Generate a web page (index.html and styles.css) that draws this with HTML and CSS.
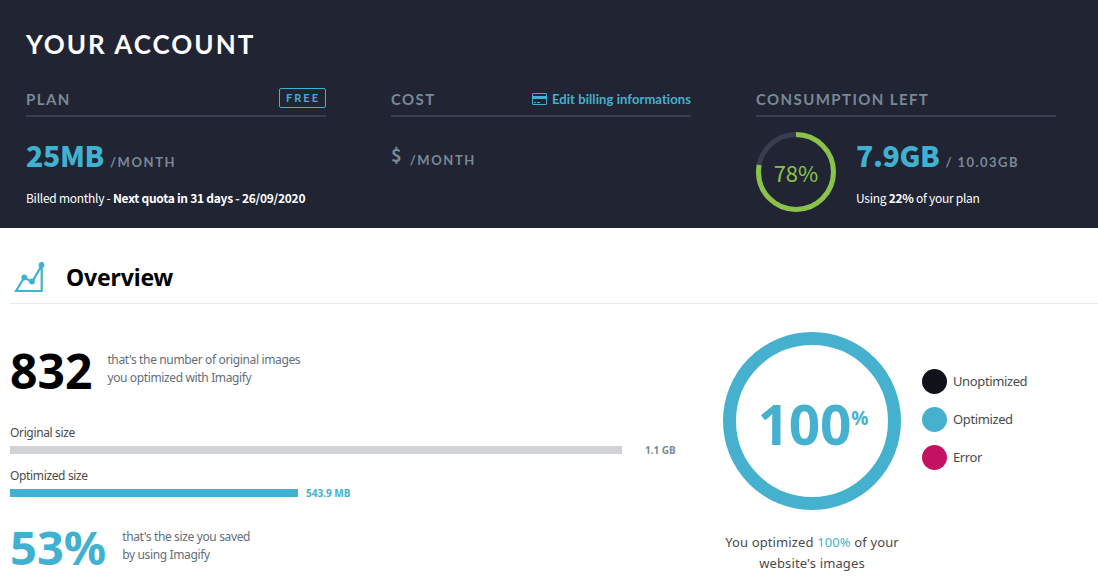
FILE: index.html
```
<!DOCTYPE html>
<html lang="en">
<head>
    <meta charset="UTF-8">
    <meta name="viewport" content="width=device-width, initial-scale=1.0">
    <title>Your Account</title>
    <link rel="stylesheet" href="styles.css">
</head>
<body>
    <section class="account">
        <h1>Your Account</h1>

        <div class="account-columns">
            <div class="column">
                <div class="column-header">
                    <h2>Plan</h2>
                    <span class="badge">Free</span>
                </div>
                <p class="value"><strong>25MB</strong><span class="unit">/month</span></p>
                <p class="note">Billed monthly - <b>Next quota in 31 days - 26/09/2020</b></p>
            </div>

            <div class="column">
                <div class="column-header">
                    <h2>Cost</h2>
                    <a href="#" class="billing-link">
                        <svg width="15" height="12" viewBox="0 0 15 12">
                            <rect x="0.5" y="0.5" width="14" height="11" rx="0.5" fill="none" stroke="#40b1d0"/>
                            <path d="M1 3h13v3H1z" fill="#40b1d0"/>
                            <path d="M2 9.5h2M5 9.5h3" stroke="#40b1d0"/>
                        </svg>
                        <span>Edit billing informations</span>
                    </a>
                </div>
                <p class="value value-cost"><span class="currency">$</span><span class="unit">/month</span></p>
            </div>

            <div class="column">
                <div class="column-header">
                    <h2>Consumption left</h2>
                </div>
                <div class="consumption">
                    <div class="small-chart">
                        <svg width="80" height="80" viewBox="0 0 80 80">
                            <circle cx="40" cy="40" r="37.5" fill="none" stroke="#3a3d51" stroke-width="5"/>
                            <circle cx="40" cy="40" r="37.5" fill="none" stroke="#8bc34a" stroke-width="5" pathLength="100" stroke-dasharray="78 22" transform="rotate(-90 40 40)"/>
                        </svg>
                        <span class="small-chart-text">78%</span>
                    </div>
                    <div>
                        <p class="value"><strong>7.9GB</strong><span class="unit unit-left">/ 10.03GB</span></p>
                        <p class="note">Using <b>22%</b> of your plan</p>
                    </div>
                </div>
            </div>
        </div>
    </section>

    <section class="overview">
        <div class="overview-header">
            <svg width="32" height="32" viewBox="0 0 32 32">
                <path d="M2 29L10.3 15.5L18 20L27.7 3.5V29Z" fill="none" stroke="#40b1d0" stroke-width="2.2"/>
                <circle cx="10.3" cy="15.5" r="2.9" fill="#40b1d0"/>
                <circle cx="18" cy="19.5" r="2.9" fill="#40b1d0"/>
                <circle cx="27.5" cy="2.9" r="2.9" fill="#40b1d0"/>
            </svg>
            <h2>Overview</h2>
        </div>

        <div class="overview-content">
            <div class="stats">
                <div class="stat">
                    <span class="number">832</span>
                    <p>that's the number of original images<br>you optimized with Imagify</p>
                </div>

                <div class="bars">
                    <p class="bar-label">Original size</p>
                    <div class="bar-row bar-original">
                        <div class="bar" style="width: 612px"></div>
                        <span>1.1 GB</span>
                    </div>
                    <p class="bar-label">Optimized size</p>
                    <div class="bar-row bar-optimized">
                        <div class="bar" style="width: 288px"></div>
                        <span>543.9 MB</span>
                    </div>
                </div>

                <div class="stat stat-saved">
                    <span class="number">53%</span>
                    <p>that's the size you saved<br>by using Imagify</p>
                </div>
            </div>

            <div class="chart-column">
                <div class="chart">
                    <span class="chart-number">100</span><span class="chart-percent">%</span>
                </div>
                <p class="chart-text">You optimized <span>100%</span> of your<br>website's images</p>
            </div>

            <ul class="legend">
                <li><span class="dot dot-unoptimized"></span><span>Unoptimized</span></li>
                <li><span class="dot dot-optimized"></span><span>Optimized</span></li>
                <li><span class="dot dot-error"></span><span>Error</span></li>
            </ul>
        </div>
    </section>
</body>
</html>
```
FILE: styles.css
```
* {
    margin: 0;
    padding: 0;
    box-sizing: border-box;
}

body {
    background-color: #fff;
    font-family: 'Noto Sans', 'Open Sans', sans-serif;
    overflow: hidden;
}

/* Account */
.account {
    height: 228px;
    padding: 26px 0 0 26px;
    background-color: #212433;
    color: #fff;
    font-family: 'Lato', sans-serif;
}

.account h1 {
    height: 36px;
    line-height: 36px;
    font-size: 26px;
    font-weight: 700;
    letter-spacing: 2px;
    text-transform: uppercase;
}

.account-columns {
    display: flex;
    gap: 65px;
    margin-top: 22px;
}

.column {
    width: 300px;
}

.column-header {
    display: flex;
    justify-content: space-between;
    height: 33px;
    padding-top: 4px;
    border-bottom: 2px solid #3a3d51;
}

.column-header h2 {
    line-height: 22px;
    font-size: 15px;
    font-weight: 700;
    letter-spacing: 1.4px;
    text-transform: uppercase;
    color: #7a8996;
}

.badge {
    height: 20px;
    padding: 0 5px 0 6px;
    border: 1px solid #40b1d0;
    border-radius: 2px;
    line-height: 18px;
    font-size: 11px;
    font-weight: 700;
    letter-spacing: 2px;
    text-transform: uppercase;
    color: #40b1d0;
}

.billing-link {
    display: flex;
    align-items: center;
    gap: 5px;
    height: 22px;
    font-size: 13px;
    font-weight: 700;
    letter-spacing: 0.08px;
    text-decoration: none;
    color: #40b1d0;
}

.value {
    display: flex;
    align-items: baseline;
    gap: 6px;
    height: 40px;
    margin-top: 18px;
    line-height: 40px;
    white-space: nowrap;
}

.value strong {
    font-family: 'Noto Sans CJK SC', sans-serif;
    font-size: 28.5px;
    font-weight: 900;
    letter-spacing: -0.4px;
    color: #40b1d0;
}

.unit {
    font-size: 13px;
    font-weight: 700;
    letter-spacing: 1.6px;
    text-transform: uppercase;
    color: #7a8996;
}

.unit-left {
    letter-spacing: 1.45px;
}

.value-cost {
    align-items: flex-start;
    gap: 8px;
    margin-top: 17px;
}

.value-cost .unit {
    line-height: 52px;
}

.currency {
    font-family: 'Noto Sans CJK SC', sans-serif;
    font-size: 18px;
    font-weight: 700;
    color: #7a8996;
}

.note {
    margin-top: 13px;
    line-height: 20px;
    font-family: 'Noto Sans CJK SC', sans-serif;
    font-size: 12px;
    letter-spacing: -0.27px;
    white-space: nowrap;
}

.consumption {
    display: flex;
    gap: 20px;
}

.small-chart {
    display: grid;
    width: 80px;
    height: 80px;
    margin-top: 15px;
    place-items: center;
}

.small-chart svg,
.small-chart-text {
    grid-area: 1 / 1;
}

.small-chart-text {
    padding-bottom: 1px;
    font-family: 'Noto Sans CJK SC', sans-serif;
    font-size: 22px;
    line-height: 30px;
    color: #8bc34a;
}

/* Overview */
.overview {
    padding-left: 10px;
}

.overview-header {
    display: flex;
    gap: 20px;
    height: 76px;
    padding: 34px 0 0 4px;
    border-bottom: 1px solid #e5ebef;
}

.overview-header h2 {
    line-height: 31px;
    font-size: 23px;
    font-weight: 700;
    letter-spacing: -0.15px;
    color: #000;
}

.overview-content {
    display: flex;
}

.stats {
    width: 713px;
    padding-top: 42px;
}

.stat {
    display: flex;
    gap: 15px;
    height: 50px;
}

.number {
    line-height: 50px;
    font-size: 48px;
    font-weight: 700;
    color: #000;
}

.stat p {
    padding-top: 5px;
    line-height: 18px;
    font-size: 12px;
    letter-spacing: -0.36px;
    color: #626e7b;
}

.stat-saved {
    gap: 16px;
}

.stat-saved .number {
    line-height: 49px;
    font-size: 47px;
    color: #40b1d0;
}

.bars {
    height: 127px;
    padding-top: 27px;
}

.bar-label {
    height: 20px;
    line-height: 20px;
    font-size: 12px;
    letter-spacing: -0.35px;
    color: #4a4a4a;
}

.bar-row {
    display: flex;
    align-items: center;
    height: 14px;
    margin-bottom: 9px;
    font-size: 10px;
    font-weight: 700;
}

.bar {
    height: 8px;
}

.bar-original .bar {
    background-color: #d2d3d6;
}

.bar-original span {
    margin-left: 23px;
    color: #7a8996;
}

.bar-optimized .bar {
    background-color: #40b1d0;
}

.bar-optimized span {
    margin-left: 8px;
    color: #40b1d0;
}

.chart-column {
    width: 178px;
    padding-top: 28px;
}

.chart {
    display: flex;
    justify-content: center;
    width: 178px;
    height: 178px;
    padding: 38px 0 0 2px;
    border: 13px solid #46b1ce;
    border-radius: 50%;
    font-weight: 700;
    color: #46b1ce;
}

.chart-number {
    line-height: 82px;
    font-size: 55px;
    letter-spacing: -0.3px;
}

.chart-percent {
    line-height: 70px;
    font-size: 19px;
}

.chart-text {
    margin-top: 22px;
    line-height: 21px;
    font-size: 13px;
    letter-spacing: 0.13px;
    text-align: center;
    white-space: nowrap;
    color: #4a4a4a;
}

.chart-text span {
    color: #46b1ce;
}

.legend {
    padding: 65px 0 0 21px;
    list-style: none;
}

.legend li {
    display: flex;
    gap: 6px;
    height: 25px;
    margin-bottom: 13px;
    line-height: 24px;
    font-size: 13px;
    letter-spacing: -0.38px;
    color: #4a4a4a;
}

.dot {
    width: 25px;
    height: 25px;
    border-radius: 50%;
}

.dot-unoptimized {
    background-color: #10121a;
}

.dot-optimized {
    background-color: #46b1ce;
}

.dot-error {
    background-color: #c51162;
}
```
